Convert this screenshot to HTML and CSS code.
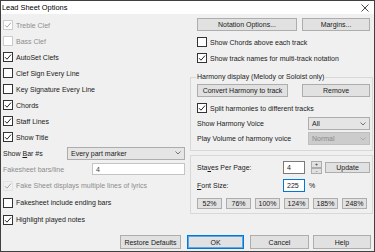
FILE: index.html
```html
<!DOCTYPE html>
<html>
<head>
<meta charset="utf-8">
<link rel="stylesheet" href="styles.css">
</head>
<body>
<div class="window">
  <div class="titlebar">
    <span class="title">Lead Sheet Options</span>
    <svg class="close" width="8" height="8" viewBox="0 0 8 8"><path d="M0.5 0.5 L7.5 7.5 M7.5 0.5 L0.5 7.5" stroke="#333" stroke-width="0.9" fill="none"/></svg>
  </div>
  <div class="main">
    <div class="left">
      <div class="row dis"><span class="cb"><svg viewBox="0 0 8 8"><path d="M1 4.2 L3 6.2 L7 1.6" stroke="#a8a8a8" stroke-width="1" fill="none"/></svg></span>Treble Clef</div>
      <div class="row dis"><span class="cb"></span>Bass Clef</div>
      <div class="row"><span class="cb"><svg viewBox="0 0 8 8"><path d="M1 4.2 L3 6.2 L7 1.6" stroke="#222" stroke-width="1" fill="none"/></svg></span>AutoSet Clefs</div>
      <div class="row"><span class="cb"></span>Clef Sign Every Line</div>
      <div class="row"><span class="cb"></span>Key Signature Every Line</div>
      <div class="row"><span class="cb"><svg viewBox="0 0 8 8"><path d="M1 4.2 L3 6.2 L7 1.6" stroke="#222" stroke-width="1" fill="none"/></svg></span>Chords</div>
      <div class="row"><span class="cb"><svg viewBox="0 0 8 8"><path d="M1 4.2 L3 6.2 L7 1.6" stroke="#222" stroke-width="1" fill="none"/></svg></span>Staff Lines</div>
      <div class="row"><span class="cb"><svg viewBox="0 0 8 8"><path d="M1 4.2 L3 6.2 L7 1.6" stroke="#222" stroke-width="1" fill="none"/></svg></span>Show Title</div>
      <div class="row">
        <span>Show <u>B</u>ar #s</span>
        <div class="select barsel"><span>Every part marker</span><svg class="chev" width="6" height="4" viewBox="0 0 6 4"><path d="M0.5 0.5 L3 3 L5.5 0.5" stroke="#555" stroke-width="0.8" fill="none"/></svg></div>
      </div>
      <div class="row">
        <span class="graytext">Fakesheet bars/line</span>
        <div class="input fakein">4</div>
      </div>
      <div class="row tall dis"><span class="cb nobox"><svg viewBox="0 0 8 8"><path d="M1 4.2 L3 6.2 L7 1.6" stroke="#a8a8a8" stroke-width="1" fill="none"/></svg></span>Fake Sheet displays multiple lines of lyrics</div>
      <div class="row tall"><span class="cb"></span>Fakesheet include ending bars</div>
      <div class="row tall"><span class="cb"><svg viewBox="0 0 8 8"><path d="M1 4.2 L3 6.2 L7 1.6" stroke="#222" stroke-width="1" fill="none"/></svg></span>Highlight played notes</div>
    </div>
    <div class="right">
      <div class="btnrow top">
        <div class="btn w100">Notation Options...</div>
        <div class="btn w68">Margins...</div>
      </div>
      <div class="row rchk first"><span class="cb"></span>Show Chords above each track</div>
      <div class="row rchk"><span class="cb"><svg viewBox="0 0 8 8"><path d="M1 4.2 L3 6.2 L7 1.6" stroke="#222" stroke-width="1" fill="none"/></svg></span>Show track names for multi-track notation</div>
      <fieldset class="group harmony">
        <legend>Harmony display (Melody or Soloist only)</legend>
        <div class="btnrow">
          <div class="btn w91">Convert Harmony to track</div>
          <div class="btn w68">Remove</div>
        </div>
        <div class="row split"><span class="cb"><svg viewBox="0 0 8 8"><path d="M1 4.2 L3 6.2 L7 1.6" stroke="#222" stroke-width="1" fill="none"/></svg></span>Split harmonies to different tracks</div>
        <div class="row hrow">
          <span>Show Harmony Voice</span>
          <div class="select hsel"><span>All</span><svg class="chev" width="6" height="4" viewBox="0 0 6 4"><path d="M0.5 0.5 L3 3 L5.5 0.5" stroke="#555" stroke-width="0.8" fill="none"/></svg></div>
        </div>
        <div class="row hrow">
          <span>Play Volume of harmony voice</span>
          <div class="select hsel disabled"><span>Normal</span><svg class="chev" width="6" height="4" viewBox="0 0 6 4"><path d="M0.5 0.5 L3 3 L5.5 0.5" stroke="#a0a0a0" stroke-width="0.8" fill="none"/></svg></div>
        </div>
      </fieldset>
      <fieldset class="group staves">
        <div class="srow">
          <span class="slabel">Sta<u>v</u>es Per Page:</span>
          <div class="input sin">4</div>
          <div class="spin"><div class="spinbtn">+</div><div class="spinbtn">-</div></div>
          <div class="btn upd">Update</div>
        </div>
        <div class="srow fontrow">
          <span class="slabel"><u>F</u>ont Size:</span>
          <div class="input sin focus">225</div>
          <span class="pct">%</span>
        </div>
        <div class="pctrow">
          <div class="btn pbtn">52%</div>
          <div class="btn pbtn">76%</div>
          <div class="btn pbtn">100%</div>
          <div class="btn pbtn">124%</div>
          <div class="btn pbtn">185%</div>
          <div class="btn pbtn">248%</div>
        </div>
      </fieldset>
    </div>
  </div>
  <div class="footer">
    <div class="btn restore">Restore Defaults</div>
    <div class="btn ok">OK</div>
    <div class="btn cancel">Cancel</div>
    <div class="btn help">Help</div>
  </div>
</div>
</body>
</html>
```

FILE: styles.css
```css
* { box-sizing: border-box; }
html, body { margin: 0; padding: 0; }
body {
  font-family: "Liberation Sans", Arial, sans-serif;
  font-size: 7px;
  color: #1a1a1a;
}
.window {
  width: 375px;
  height: 252px;
  border: 1px solid #404040;
  background: #f0f0f0;
  display: flex;
  flex-direction: column;
  overflow: hidden;
}
.titlebar {
  height: 13px;
  flex: none;
  background: #fff;
  display: flex;
  align-items: center;
  padding-left: 1px;
}
.title { font-size: 7.4px; color: #000; }
.close { margin-left: auto; margin-right: 5px; }
.main { display: flex; flex: 1; }
.left {
  width: 187px;
  flex: none;
  padding: 3px 3px 0 2px;
  display: flex;
  flex-direction: column;
}
.row {
  height: 16px;
  display: flex;
  align-items: center;
  white-space: nowrap;
}
.row.tall { height: 17px; }
.cb {
  width: 10px;
  height: 10px;
  border: 1px solid #333;
  background: #fff;
  margin-right: 3px;
  flex: none;
  display: flex;
  align-items: center;
  justify-content: center;
}
.cb svg { width: 8px; height: 8px; }
.dis { color: #8d8d8d; }
.dis .cb { border-color: #cccccc; }
.dis .cb.nobox { border-color: #e3e3e3; background: transparent; }
.graytext { color: #8d8d8d; }
.select {
  height: 13px;
  border: 1px solid #adadad;
  background: #e5e5e5;
  display: flex;
  align-items: center;
  padding-left: 3px;
  margin-left: auto;
}
.select .chev { margin-left: auto; margin-right: 3px; }
.barsel { width: 118px; }
.input {
  height: 12px;
  border: 1px solid #7a7a7a;
  background: #fff;
  padding-left: 3px;
  display: flex;
  align-items: center;
}
.fakein { width: 93px; margin-left: auto; border-color: #c4c4c4; color: #444; }
.right {
  flex: 1;
  padding: 4px 1px 0 2px;
  display: flex;
  flex-direction: column;
}
.btnrow { display: flex; gap: 5px; height: 13px; }
.btnrow.top { padding-left: 7px; }
.btn {
  height: 13px;
  border: 1px solid #adadad;
  background: #e1e1e1;
  display: flex;
  align-items: center;
  justify-content: center;
  white-space: nowrap;
}
.w100 { width: 100px; }
.w68 { width: 68px; }
.w91 { width: 91px; margin-right: 9px; }
.rchk { padding-left: 7px; }
.rchk.first { margin-top: 3px; }
.group {
  margin: 0;
  border: 1px solid #d8d8d8;
  padding: 0 2px 0 6px;
  min-width: 0;
}
.harmony { margin-top: 6px; padding-top: 2px; padding-bottom: 4px; }
.harmony legend {
  padding: 0 1px;
  margin-left: -1px;
  line-height: 10px;
  height: 10px;
}
.split { margin-top: 3px; }
.hrow { height: 15px; }
.hsel { width: 62px; }
.hsel.disabled { background: #cccccc; border-color: #bfbfbf; color: #8a8a8a; }
.staves { margin-top: 4px; padding-top: 5px; padding-bottom: 4px; }
.srow { display: flex; align-items: center; height: 13px; }
.slabel { width: 86px; flex: none; }
.sin { width: 22px; height: 13px; }
.spin { margin-left: 6px; display: flex; flex-direction: column; }
.spinbtn {
  width: 11px;
  height: 6.5px;
  border: 1px solid #adadad;
  background: #e1e1e1;
  font-size: 5px;
  line-height: 4px;
  text-align: center;
}
.upd { width: 45px; margin-left: 3px; height: 11px; }
.fontrow { margin-top: 5px; }
.focus { border-color: #0078d7; }
.pct { margin-left: 4px; }
.pctrow { display: flex; gap: 4px; margin-top: 6px; }
.pbtn { width: 25px; height: 11px; }
.footer {
  flex: none;
  display: flex;
  justify-content: flex-end;
  padding: 0 3px 2px 0;
  gap: 6px;
}
.footer .btn { height: 14px; }
.restore { width: 61px; }
.ok { width: 57px; border-color: #0078d7; box-shadow: inset 0 0 0 1px #5ea6e6; }
.cancel { width: 59px; }
.help { width: 58px; margin-left: -2px; }
```
